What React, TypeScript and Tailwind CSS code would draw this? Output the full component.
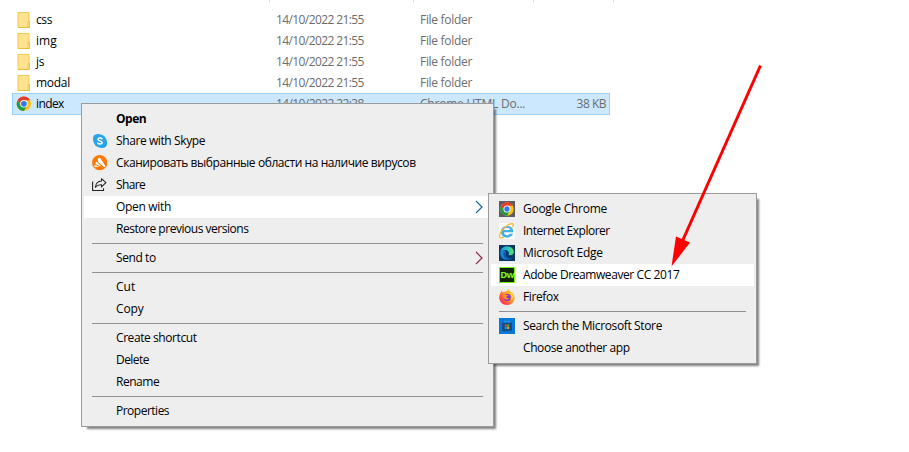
import type { ReactNode } from "react";

type Entry =
  | { kind: "sep" }
  | { kind: "item"; label: string; track: string; icon?: ReactNode; bold?: boolean; active?: boolean; sub?: string };

function Folder() {
  return (
    <svg width="16" height="16" viewBox="0 0 16 16">
      <path d="M2 .5h11v9h.5v6H2z" fill="#ffe391" stroke="#efca50" />
      <path d="M12 9.500h1.500v6H12z" fill="#ffedb0" stroke="#e8bd37" strokeWidth=".8" />
      <path d="M2 15.500h11" stroke="#e8bd37" />
    </svg>
  );
}

function Chrome({ tile = false }: { tile?: boolean }) {
  return (
    <svg width="16" height="16" viewBox="0 0 16 16">
      {tile && <path d="M0 0h16v16H0z" fill="#5d5c61" />}
      <g transform={tile ? "translate(.8 .8) scale(.9)" : "translate(.2 .1) scale(.96)"}>
        <circle cx="8" cy="8" r="7.500" fill="#fbc116" />
        <path d="M1.500 4.250A7.500 7.500 0 0 1 14.500 4.250H8L4.750 9.900z" fill="#e33b2e" />
        <path d="M1.500 4.250A7.500 7.500 0 0 0 8 15.500L11.250 9.900H4.750z" fill="#229a49" />
        <circle cx="8" cy="8" r="3.900" fill="#fff" />
        <circle cx="8" cy="8" r="3" fill="#3478e8" />
      </g>
    </svg>
  );
}

function Skype() {
  return (
    <svg width="16" height="16" viewBox="0 0 16 16">
      <circle cx="5.800" cy="5.800" r="4.900" fill="#28a8ea" />
      <circle cx="10.200" cy="10.200" r="4.900" fill="#1fa0e6" />
      <circle cx="8" cy="8" r="6.500" fill="#26a5e8" />
      <path d="M10 5.800C9.300 4.800 6 4.600 6 6.400c0 1.900 4.200 1.200 4.200 3.200 0 1.900-3.600 1.800-4.400.5" fill="none" stroke="#fff" strokeWidth="1.500" strokeLinecap="round" />
    </svg>
  );
}

function Avast() {
  return (
    <svg width="16" height="16" viewBox="0 0 16 16">
      <circle cx="7.700" cy="7.700" r="7.600" fill="#ff7800" />
      <path d="M6.300 3.200c.6-1.100 1.500-.9 2.100 0l4.700 7.200c.5 1-.4 1.900-1.400 1.400L6.500 7.200C5.500 6 5.600 4.500 6.300 3.200z" fill="#fff" />
      <path d="M4.600 6.800l5 4.700-5.900-2.300c-.6-.9.1-2.500.9-2.400z" fill="#fff" />
      <path d="M2.900 9.900l4.600 1.700-4.200.7c-1.400 0-1.300-2.200-.4-2.400z" fill="#fff" />
    </svg>
  );
}

function Share() {
  return (
    <svg width="16" height="16" viewBox="0 0 16 16" fill="none" stroke="#222" strokeWidth="1.100">
      <path d="M.6 4.500v9h10.900v-2.300" />
      <path d="M9.500 1.700L13.900 5.700 9.500 9.800V7.700C6.400 7.500 4.700 8.500 3.400 10.300 3.700 6.700 6 4.200 9.500 4z" strokeLinejoin="round" />
    </svg>
  );
}

function Explorer() {
  return (
    <svg width="16" height="16" viewBox="0 0 16 16">
      <path d="M0 0h16v16H0z" fill="#fafafa" />
      <path d="M14.400 9.200H5c.1 3.300 4.300 3.900 5.700 1.600h3.400C12 16.500 1.900 15.700 1.900 8.700 1.900 1.300 14.800.9 14.400 9.200zM5 6.900h6C10.700 3.900 5.500 3.900 5 6.900z" fill="#44aee8" />
      <path d="M13.500 4.300C16 .4 13.300-.4 8.900 2 3.800 4.900-.5 11.300.8 14.200c.6 1.200 2.400.8 4.200-.2" fill="none" stroke="#f4bd29" strokeWidth="1.400" />
    </svg>
  );
}

function Edge() {
  return (
    <svg width="16" height="16" viewBox="0 0 16 16">
      <defs>
        <linearGradient id="edge-wave" x1="0" y1="0" x2="1" y2="0">
          <stop offset="0" stopColor="#219fe0" />
          <stop offset=".55" stopColor="#25c1bd" />
          <stop offset="1" stopColor="#6bdc62" />
        </linearGradient>
      </defs>
      <path d="M0 0h16v16H0z" fill="#0a3564" />
      <path d="M1.200 8C1 13 7 17 12.600 13.200 7.500 14 6 10.500 7 7.300 5.500 4 2 5 1.200 8z" fill="#1685d4" />
      <path d="M5 6.500C3.300 9.500 5.300 14.500 10 14.300c1.400 0 2.600-.6 3.500-1.600-4 1.100-7.500-.8-6.600-4.200z" fill="#0b58a8" />
      <path d="M1.200 7.500C1.600 3.800 4.500 1.300 8 1.300c4.100 0 6.800 2.900 6.800 5.800 0 3-3.900 4-5.500 2.700.8-1 .7-2.400-.2-3.300C7.200 4.400 2.800 4.600 1.200 7.500z" fill="url(#edge-wave)" />
    </svg>
  );
}

function Dreamweaver() {
  return (
    <div className="flex h-4 w-4 items-center justify-center border border-[#73ef13] bg-[#10220a] font-['Open_Sans',sans-serif] text-[9.5px] font-bold leading-none tracking-[-0.8px] text-[#7bf51c]">
      Dw
    </div>
  );
}

function Firefox() {
  return (
    <svg width="16" height="16" viewBox="0 0 16 16">
      <defs>
        <linearGradient id="fox-fire" x1="1" y1="0" x2="0" y2="1">
          <stop offset="0" stopColor="#ffe14a" />
          <stop offset=".45" stopColor="#ff9a28" />
          <stop offset=".75" stopColor="#ff4545" />
          <stop offset="1" stopColor="#ec1b77" />
        </linearGradient>
      </defs>
      <path d="M1.900 3.200l.3-1.700 1.600 1.700C5 2.500 6 2.300 7 2.400L9.500.1c.3 1.600 1.400 2.200 2.500 3l.5-.7c2 1.800 3.300 4 3.200 6.600C15.500 13 12.200 16 8 16S.3 12.900.2 8.800C.2 6.500.8 4.500 1.900 3.200z" fill="url(#fox-fire)" />
      <circle cx="8.300" cy="8.400" r="3.500" fill="#7b3bce" />
      <path d="M3.900 5.300c1.400-.4 2.500.5 3.500.6h2c-.2 1.100-1.700 1.100-2 1.700 0 1.500 1.600 2 3.300 1.200-1.100 2.900-5.900 2-6.200-.8z" fill="#ff8b29" />
      <path d="M9.500.1c.2 2.200 2.500 2.900 3 5.600.8 2.300-.2 4.700-1.600 5.600 3.400-.6 5-4.700 1.900-8L12 3.100C10.900 2.500 9.800 1.700 9.500.1z" fill="#ffd33e" />
    </svg>
  );
}

function Store() {
  return (
    <svg width="16" height="16" viewBox="0 0 16 16">
      <path d="M0 0h16v16H0z" fill="#0878d7" />
      <path d="M5.700 5V3.300h4.600V5" fill="none" stroke="#34a4ee" strokeWidth=".9" />
      <path d="M3 4.800h10v7.500a1 1 0 0 1-1 1H4a1 1 0 0 1-1-1z" fill="#134d8b" />
      <path d="M5.800 6.600h1.900v1.900H5.800z" fill="#f35325" />
      <path d="M8.200 6.600h1.900v1.900H8.200z" fill="#81bc06" />
      <path d="M5.800 9h1.900v1.900H5.800z" fill="#05a6f0" />
      <path d="M8.200 9h1.900v1.900H8.200z" fill="#ffba08" />
    </svg>
  );
}

const files = [
  { name: "css", track: "tracking-[-0.4px]" },
  { name: "img", track: "tracking-[0px]" },
  { name: "js", track: "tracking-[-0.3px]" },
  { name: "modal", track: "tracking-[-0.3px]" },
];

const mainMenu: Entry[] = [
  { kind: "item", label: "Open", track: "tracking-[-0.5px]", bold: true },
  { kind: "item", label: "Share with Skype", track: "tracking-[-0.4px]", icon: <Skype /> },
  { kind: "item", label: "Сканировать выбранные области на наличие вирусов", track: "tracking-[-0.42px]", icon: <Avast /> },
  { kind: "item", label: "Share", track: "tracking-[-0.6px]", icon: <Share /> },
  { kind: "item", label: "Open with", track: "tracking-[-0.32px]", active: true, sub: "#176a9e" },
  { kind: "item", label: "Restore previous versions", track: "tracking-[-0.47px]" },
  { kind: "sep" },
  { kind: "item", label: "Send to", track: "tracking-[-0.42px]", sub: "#922c43" },
  { kind: "sep" },
  { kind: "item", label: "Cut", track: "tracking-[0px]" },
  { kind: "item", label: "Copy", track: "tracking-[-0.15px]" },
  { kind: "sep" },
  { kind: "item", label: "Create shortcut", track: "tracking-[-0.42px]" },
  { kind: "item", label: "Delete", track: "tracking-[-0.55px]" },
  { kind: "item", label: "Rename", track: "tracking-[-0.48px]" },
  { kind: "sep" },
  { kind: "item", label: "Properties", track: "tracking-[-0.5px]" },
];

const openWithMenu: Entry[] = [
  { kind: "item", label: "Google Chrome", track: "tracking-[-0.27px]", icon: <Chrome tile /> },
  { kind: "item", label: "Internet Explorer", track: "tracking-[-0.5px]", icon: <Explorer /> },
  { kind: "item", label: "Microsoft Edge", track: "tracking-[-0.25px]", icon: <Edge /> },
  { kind: "item", label: "Adobe Dreamweaver CC 2017", track: "tracking-[-0.41px]", icon: <Dreamweaver />, active: true },
  { kind: "item", label: "Firefox", track: "tracking-[-0.4px]", icon: <Firefox /> },
  { kind: "sep" },
  { kind: "item", label: "Search the Microsoft Store", track: "tracking-[-0.36px]", icon: <Store /> },
  { kind: "item", label: "Choose another app", track: "tracking-[-0.4px]" },
];

function Menu({ entries, place }: { entries: Entry[]; place: string }) {
  return (
    <div className={`absolute border border-[#9b9b9b] bg-[#eeeeee] px-0.5 py-1 shadow-[4px_4px_2px_-2px_rgba(0,0,0,0.5)] ${place}`}>
      {entries.map((e, i) =>
        e.kind === "sep" ? (
          <div key={i} className="mr-2 ml-2 h-[7px] pt-[3px]">
            <div className="h-px bg-[#919191]" />
          </div>
        ) : (
          <div key={i} className={`flex h-[22px] items-center pr-[7px] pl-2 whitespace-nowrap ${e.active ? "bg-white" : ""}`}>
            <span className="mr-2 flex w-4 shrink-0">{e.icon}</span>
            <span className={`${e.track} ${e.bold ? "font-bold" : ""}`}>{e.label}</span>
            {e.sub && (
              <svg className="ml-auto" width="9" height="14" viewBox="0 0 9 14" fill="none" stroke={e.sub} strokeWidth="1.200">
                <path d="M1 1l6 6-6 6" />
              </svg>
            )}
          </div>
        ),
      )}
    </div>
  );
}

export default function App() {
  return (
    <div className="relative h-[452px] w-[909px] overflow-hidden bg-white font-['Open_Sans','Noto_Sans',sans-serif] text-[12px] leading-4 text-black">
      <div className="ml-[269px] flex h-[3px] w-[345px] border-x border-[#e2e2e2]">
        <div className="w-36 border-r border-[#e2e2e2]" />
        <div className="w-[120px] border-r border-[#e2e2e2]" />
      </div>
      <div className="mt-1.5 ml-3 w-[598px]">
        {files.map((f) => (
          <div key={f.name} className="flex h-[21px] items-center pl-1">
            <Folder />
            <span className={`ml-1 w-60 ${f.track}`}>{f.name}</span>
            <span className="w-36 tracking-[-0.6px] text-[#6d6d6d]">14/10/2022 21:55</span>
            <span className="tracking-[-0.3px] text-[#6d6d6d]">File folder</span>
          </div>
        ))}
        <div className="flex h-[22px] items-center border border-[#99d1ff] bg-[#cce8ff] pr-[3px] pl-[3px]">
          <Chrome />
          <span className="ml-1 w-60 tracking-[-0.6px]">index</span>
          <span className="w-36 tracking-[-0.6px] text-[#6d6d6d]">14/10/2022 22:38</span>
          <span className="tracking-[-0.22px] text-[#6d6d6d]">Chrome HTML Do...</span>
          <span className="ml-auto tracking-[-0.5px] text-[#6d6d6d]">38 KB</span>
        </div>
      </div>
      <Menu entries={mainMenu} place="left-[81px] top-[103px] w-[413px]" />
      <Menu entries={openWithMenu} place="left-[488px] top-[193px] w-[269px]" />
      <svg className="absolute top-0 left-0" width="909" height="452" viewBox="0 0 909 452">
        <path d="M760.500 65.500L682 242" stroke="#fe0000" strokeWidth="3" />
        <path d="M671.500 266.500L676 236.500L690 242.500z" fill="#fe0000" />
      </svg>
    </div>
  );
}
